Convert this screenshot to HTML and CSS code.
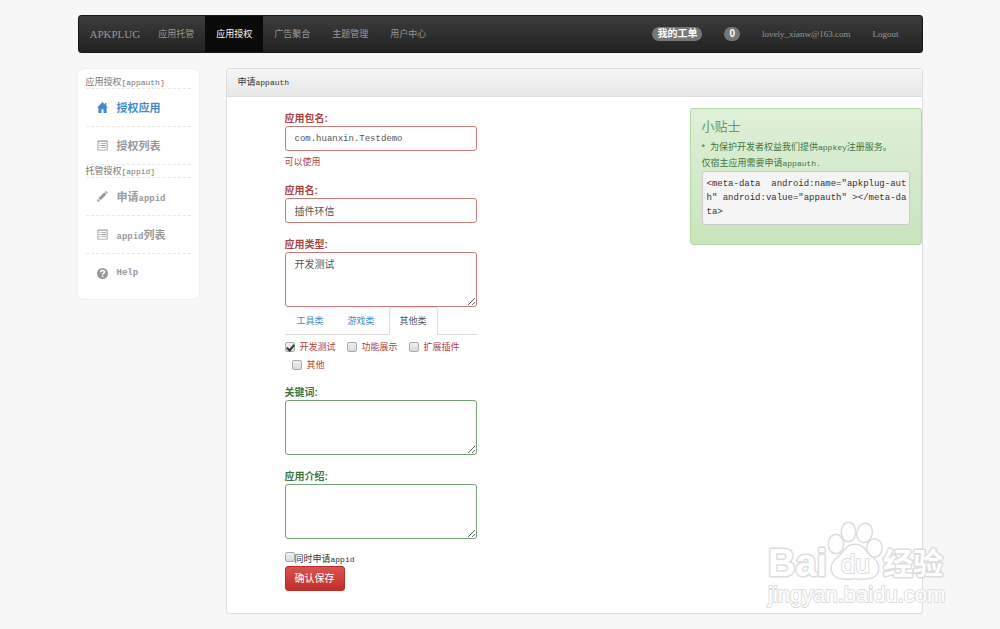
FILE: index.html
```html
<!DOCTYPE html>
<html lang="zh-CN">
<head>
<meta charset="utf-8">
<title>申请appauth - APKPLUG</title>
<link rel="stylesheet" href="styles.css">
</head>
<body>
<div class="container">
  <nav class="navbar">
    <a class="brand" href="#">APKPLUG</a>
    <a class="nav-link" href="#">应用托管</a>
    <a class="nav-link active" href="#">应用授权</a>
    <a class="nav-link" href="#">广告聚合</a>
    <a class="nav-link" href="#">主题管理</a>
    <a class="nav-link" href="#">用户中心</a>
    <div class="nav-right">
      <a class="nav-link" href="#"><span class="badge">我的工单</span></a>
      <a class="nav-link" href="#"><span class="badge">0</span></a>
      <a class="nav-link account" href="#">lovely_xianw@163.com</a>
      <a class="nav-link account" href="#">Logout</a>
    </div>
  </nav>

  <div class="columns">
    <aside class="sidebar">
      <h2 class="side-title">应用授权<span class="latin">[appauth]</span></h2>
      <a class="side-link current" href="#">
        <svg class="icon" viewBox="0 0 12 12"><path d="M6 0 0 6.400h1.500V12h3.400V8h2.200v4h3.400V6.400H12L10.200 4.500V1H8.600v1.800z"/></svg>
        授权应用</a>
      <a class="side-link" href="#">
        <svg class="icon" viewBox="0 0 12 12"><path fill-rule="evenodd" d="M.5.5h11v11H.5zM1.500 2v8.500h9V2zM2.500 3.200h1.200v1H2.500zM4.700 3.200h5v1h-5zM2.500 5.500h1.200v1H2.500zM4.700 5.500h5v1h-5zM2.500 7.800h1.200v1H2.500zM4.700 7.800h5v1h-5z"/></svg>
        授权列表</a>
      <h2 class="side-title">托管授权<span class="latin">[appid]</span></h2>
      <a class="side-link" href="#">
        <svg class="icon" viewBox="0 0 12 12"><path d="M0 11.700.9 8.500 3.200 10.800zM1.600 7.700 8 1.400 10.300 3.700 3.900 10zM8.700.8 9.300.2Q9.700-.1 10.200.2L11.500 1.500Q11.800 2 11.500 2.400L10.900 3z"/></svg>
        <span>申请<span class="latin-bold">appid</span></span></a>
      <a class="side-link" href="#">
        <svg class="icon" viewBox="0 0 12 12"><path fill-rule="evenodd" d="M.5.5h11v11H.5zM1.500 2v8.500h9V2zM2.500 3.200h1.200v1H2.500zM4.700 3.200h5v1h-5zM2.500 5.500h1.200v1H2.500zM4.700 5.500h5v1h-5zM2.500 7.800h1.200v1H2.500zM4.700 7.800h5v1h-5z"/></svg>
        <span><span class="latin-bold">appid</span>列表</span></a>
      <a class="side-link" href="#">
        <svg class="icon" viewBox="0 0 12 12"><circle cx="6" cy="6" r="6"/><path class="icon-cut" d="M3.900 4.600C3.900 2 8.200 2 8.200 4.400 8.200 5.800 6.100 5.700 6.100 7.300"/><path class="icon-cut" d="M6.100 8.300v1.500"/></svg>
        <span class="latin-bold">Help</span></a>
    </aside>

    <main class="panel">
      <h1 class="panel-head">申请<span class="latin">appauth</span></h1>
      <div class="panel-body">
        <form class="form">
          <div class="group error">
            <label class="caption" for="pkg">应用包名:</label>
            <input class="field mono" id="pkg" type="text" value="com.huanxin.Testdemo">
            <p class="help">可以使用</p>
          </div>
          <div class="group error">
            <label class="caption" for="name">应用名:</label>
            <input class="field" id="name" type="text" value="插件环信">
          </div>
          <div class="group error">
            <label class="caption" for="type">应用类型:</label>
            <textarea class="field area" id="type">开发测试</textarea>
            <div class="tabs">
              <a class="tab" href="#">工具类</a>
              <a class="tab" href="#">游戏类</a>
              <a class="tab selected" href="#">其他类</a>
            </div>
            <div class="checks">
              <label class="check"><input class="box" type="checkbox" checked>开发测试</label>
              <label class="check"><input class="box" type="checkbox">功能展示</label>
              <label class="check"><input class="box" type="checkbox">扩展插件</label>
              <label class="check"><input class="box" type="checkbox">其他</label>
            </div>
          </div>
          <div class="group success">
            <label class="caption" for="keywords">关键词:</label>
            <textarea class="field area" id="keywords"></textarea>
          </div>
          <div class="group success">
            <label class="caption" for="intro">应用介绍:</label>
            <textarea class="field area" id="intro"></textarea>
          </div>
          <label class="also"><input class="box" type="checkbox"><span>同时申请<span class="latin">appid</span></span></label>
          <button class="save" type="submit">确认保存</button>
        </form>
        <section class="tips">
          <h2 class="tips-title">小贴士</h2>
          <p class="tips-text">*&nbsp; 为保护开发者权益我们提供<span class="latin">appkey</span>注册服务。<br>仅宿主应用需要申请<span class="latin">appauth.</span></p>
          <pre class="code">&lt;meta-data  android:name="apkplug-aut
h" android:value="appauth" &gt;&lt;/meta-da
ta&gt;</pre>
        </section>
      </div>
    </main>
  </div>
</div>

<svg class="watermark" viewBox="0 0 190 94" aria-hidden="true">
  <text class="wm-bai" x="8" y="57">Bai</text>
  <g class="wm-paw">
    <ellipse cx="76" cy="25" rx="7" ry="9"/>
    <ellipse cx="88.500" cy="13" rx="6.500" ry="9"/>
    <ellipse cx="104.500" cy="14" rx="7" ry="9" transform="rotate(12 104.500 14)"/>
    <ellipse cx="114.500" cy="29" rx="7" ry="8.500"/>
    <path d="M95 26c-9 0-10 7-15 11-5 4-9 8-8 14 2 10 14 9 23 8 9 1 21 2 23-8 1-6-3-10-8-14-5-4-6-11-15-11z"/>
  </g>
  <text class="wm-du" x="81" y="54">du</text>
  <text class="wm-cn" x="123" y="55">经验</text>
  <text class="wm-url" x="8" y="83">jingyan.baidu.com</text>
</svg>
</body>
</html>
```
FILE: styles.css
```css
* { box-sizing: border-box; }

body {
  margin: 0;
  background: #f7f7f7;
  color: #333;
  font: 9px/14px "Liberation Sans", "Noto Sans CJK SC", sans-serif;
}

a { color: inherit; text-decoration: none; }
h1, h2, p, pre { margin: 0; font-weight: normal; }

.latin { font-family: "Liberation Mono", monospace; font-size: 8px; line-height: 1; }
.latin-bold { font-family: "Liberation Mono", monospace; font-size: 9px; line-height: 1; }

.container { width: 84.5%; margin: 0 auto; padding: 15px 0; }

/* Navigation bar */
.navbar {
  display: flex;
  align-items: stretch;
  height: 38px;
  border: 1px solid #161616;
  border-radius: 3px;
  background: linear-gradient(#3c3c3c, #222);
  color: #999;
  line-height: 36px;
}
.brand {
  padding: 0 7px 0 11px;
  font-family: "Liberation Serif", serif;
  font-size: 11px;
}
.nav-link { padding: 0 11px; }
.nav-link.active { background: #0a0a0a; color: #fff; }
.nav-right { display: flex; margin-left: auto; padding-right: 12px; }
.account { font-family: "Liberation Serif", serif; }
.badge {
  display: inline-block;
  padding: 0 5px;
  border-radius: 7px;
  background: #777;
  color: #fff;
  font-size: 10px;
  font-weight: bold;
  line-height: 14px;
}

.columns { display: flex; align-items: flex-start; gap: 27px; margin-top: 15px; }

/* Sidebar */
.sidebar {
  flex: 0 0 121px;
  margin-top: 1px;
  padding: 7px 8px;
  border-radius: 6px;
  background: #fff;
  box-shadow: 0 0 2px #ddd;
}
.side-title {
  height: 13px;
  border-bottom: 1px dashed #e8e8e8;
  color: #777;
  font-size: 9px;
  line-height: 12px;
}
.side-link {
  display: flex;
  align-items: center;
  gap: 9px;
  height: 38px;
  padding-left: 11px;
  border-bottom: 1px dashed #e8e8e8;
  color: #999;
  font-size: 11px;
  font-weight: bold;
}
.side-link:last-child { border-bottom: 0; }
.side-link.current { color: #428bca; }
.icon { width: 11px; height: 11px; fill: currentColor; }
.icon-cut { fill: none; stroke: #fff; stroke-width: 1.6; }

/* Main panel */
.panel {
  flex: 1;
  border: 1px solid #ddd;
  border-radius: 3px;
  background: #fff;
}
.panel-head {
  padding: 0 11px;
  border-bottom: 1px solid #ddd;
  background: linear-gradient(#f5f5f5, #e8e8e8);
  font-size: 9px;
  line-height: 27px;
}
.panel-body {
  display: flex;
  justify-content: space-between;
  align-items: flex-start;
  padding: 11px 0 22px 58px;
}

/* Form */
.form { width: 192px; padding-top: 4px; }
.group { margin-bottom: 15px; }
.error { color: #a94442; }
.success { color: #3c763d; }
.caption { display: block; font-size: 10px; font-weight: bold; }
.field {
  display: block;
  width: 100%;
  height: 25px;
  padding: 4px 9px;
  border: 1px solid #c47c7b;
  border-radius: 3px;
  background: #fff;
  color: #555;
  font: 10px/16px "Liberation Sans", "Noto Sans CJK SC", sans-serif;
}
.success .field { border-color: #77a078; }
.mono { font: 9px/16px "Liberation Mono", monospace; }
.area { height: 55px; resize: both; }
.help { padding-top: 4px; }

.tabs { display: flex; border-bottom: 1px solid #ddd; }
.tab {
  height: 28px;
  margin-bottom: -1px;
  padding: 0 11px;
  border: 1px solid transparent;
  color: #428bca;
  line-height: 26px;
}
.tab.selected {
  margin-left: 2px;
  padding: 0 10px;
  border-color: #ddd #ddd #fff;
  border-radius: 3px 3px 0 0;
  background: #fff;
  color: #555;
}
.checks { display: flex; flex-wrap: wrap; column-gap: 4px; padding-top: 3px; margin-bottom: -3px; }
.check {
  display: flex;
  align-items: center;
  gap: 5px;
  height: 18px;
  padding-left: 7px;
}
.check:first-child { padding-left: 0; }
.box {
  appearance: none;
  position: relative;
  width: 10px;
  height: 10px;
  margin: 0;
  border: 1px solid #aaa;
  border-radius: 2px;
  background: linear-gradient(#f0f0f0, #d8d8d8);
}
.box:checked::after {
  content: "";
  position: absolute;
  left: 2px;
  top: 0;
  width: 3px;
  height: 6px;
  border: solid #333;
  border-width: 0 2px 2px 0;
  transform: rotate(40deg);
}
.also { display: flex; align-items: flex-start; height: 14px; margin-top: -2px; }
.save {
  display: block;
  height: 25px;
  padding: 0 9px;
  border: 1px solid #b92c28;
  border-radius: 3px;
  background: linear-gradient(#d9534f, #c12e2a);
  color: #fff;
  font: 10px/16px "Liberation Sans", "Noto Sans CJK SC", sans-serif;
}

/* Tips box */
.tips {
  width: 232px;
  padding: 8px 11px 19px;
  border: 1px solid #b2dba1;
  border-radius: 3px;
  background: linear-gradient(#dff0d8, #c8e5bc);
  color: #3c763d;
}
.tips-title { font-size: 13px; line-height: 20px; color: #6a9a6b; }
.tips-text { padding-top: 2px; line-height: 16px; white-space: nowrap; }
.code {
  padding: 5px 4px;
  border: 1px solid #ccc;
  border-radius: 3px;
  background: #f5f5f5;
  color: #333;
  font: 9px/14px "Liberation Mono", monospace;
}

/* Corner watermark, lies over the page */
.watermark {
  position: absolute;
  right: 50px;
  top: 519px;
  width: 190px;
  height: 94px;
  overflow: visible;
  pointer-events: none;
  fill: #fff;
  stroke: #ddd;
  stroke-width: 3;
  stroke-linejoin: round;
  paint-order: stroke;
  font-family: "Liberation Sans", "Noto Sans CJK SC", sans-serif;
}
.wm-bai { font-size: 38px; font-weight: bold; }
.wm-paw { stroke-width: 3; }
.wm-du { font-size: 26px; stroke-width: 2; }
.wm-cn { font-size: 30px; font-weight: bold; }
.wm-url { font-size: 22px; stroke-width: 2; }
```
